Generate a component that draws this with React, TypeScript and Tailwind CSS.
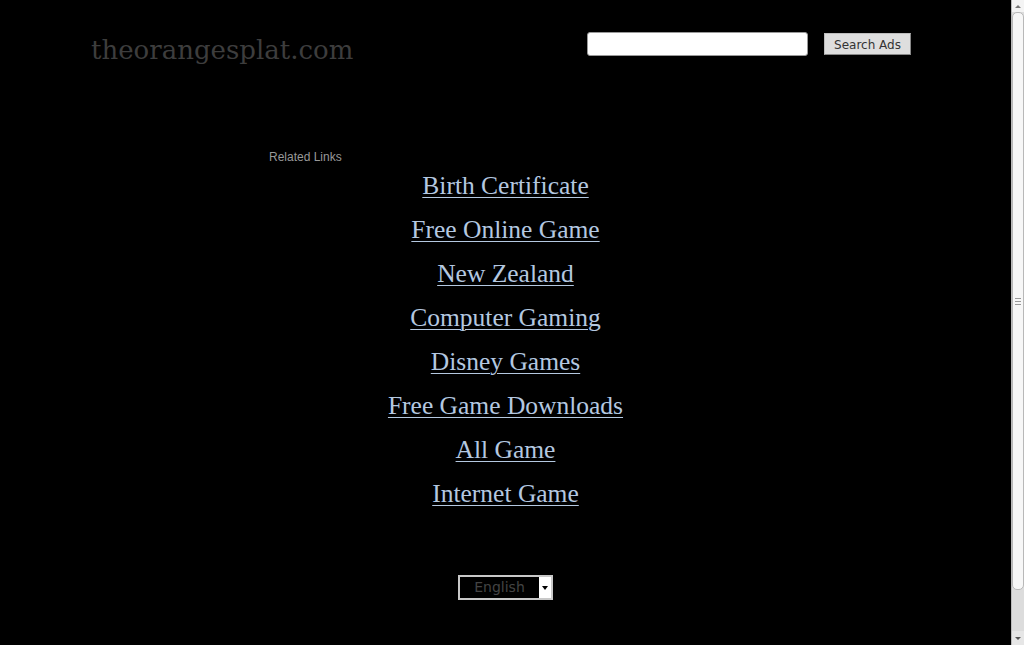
import React from "react"

const links = [
  "Birth Certificate",
  "Free Online Game",
  "New Zealand",
  "Computer Gaming",
  "Disney Games",
  "Free Game Downloads",
  "All Game",
  "Internet Game",
]

function Scrollbar() {
  return (
    <div className="w-[13px] h-[645px] flex flex-col bg-[#dcdcdc] border-l border-[#bbb]">
      <div className="h-[12px] flex items-center justify-center bg-[#f4f4f4]">
        <div className="w-0 h-0 border-l-[3px] border-r-[3px] border-b-[3px] border-l-transparent border-r-transparent border-b-[#777]" />
      </div>
      <div className="flex-1 flex flex-col">
        <div className="h-[578px] bg-[#f7f7f7] border border-[#b8b8b8] rounded-[5px] flex flex-col items-center justify-center gap-[2px]">
          <div className="w-[6px] h-px bg-[#999]" />
          <div className="w-[6px] h-px bg-[#999]" />
          <div className="w-[6px] h-px bg-[#999]" />
        </div>
        <div className="flex-1" />
      </div>
      <div className="h-[14px] flex items-center justify-center bg-[#e6e6e6]">
        <div className="w-0 h-0 border-l-[3px] border-r-[3px] border-t-[3px] border-l-transparent border-r-transparent border-t-[#555]" />
      </div>
    </div>
  )
}

export default function App() {
  return (
    <div className="w-[1024px] h-[645px] bg-black flex overflow-hidden">
      <div className="flex-1 flex flex-col">
        {/* header */}
        <div className="flex items-start pt-[32px]">
          <div className="pl-[91px] w-[587px] pt-[2px]">
            <span className="text-[26px] leading-[32px] text-[#3d3d3d] font-['DejaVu_Serif',serif]">
              theorangesplat.com
            </span>
          </div>
          <input
            type="text"
            className="w-[221px] h-[24px] bg-white rounded-[3px] border border-[#999] outline-none"
          />
          <button className="ml-[16px] mt-[1px] w-[87px] h-[22px] bg-[#dedede] border border-[#bdbdbd] border-r-[#888] border-b-[#888] text-[12px] leading-[22px] text-[#333] font-['DejaVu_Sans',sans-serif]">
            Search Ads
          </button>
        </div>

        {/* related links */}
        <div className="mt-[84px] pl-[269px] text-[12px] leading-[14px] text-[#999] font-['Liberation_Sans',sans-serif]">
          Related Links
        </div>
        <div className="flex flex-col items-center mt-[7px] gap-[14px]">
          {links.map((l) => (
            <a
              key={l}
              href="#"
              className="text-[25.5px] leading-[30px] text-[#b4c8e0] underline underline-offset-[3px] decoration-1 font-['Liberation_Serif',serif]"
            >
              {l}
            </a>
          ))}
        </div>

        {/* language select */}
        <div className="flex justify-center mt-[66px]">
          <div className="w-[95px] h-[25px] border-2 border-[#c8c8c8] flex">
            <div className="flex-1 text-center text-[14px] leading-[21px] text-[#444] font-['DejaVu_Sans',sans-serif]">
              English
            </div>
            <div className="w-[12px] bg-white flex items-center justify-center">
              <div className="w-0 h-0 border-l-[3px] border-r-[3px] border-t-[4px] border-l-transparent border-r-transparent border-t-black" />
            </div>
          </div>
        </div>
      </div>
      <Scrollbar />
    </div>
  )
}
